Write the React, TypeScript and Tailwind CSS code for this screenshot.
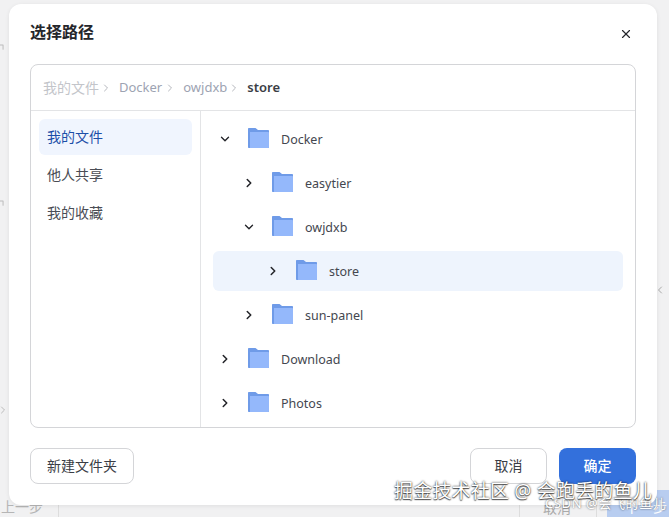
import { ChevronDown, ChevronRight, ChevronLeft, X } from 'lucide-react';

const rows = [
  { name: 'Docker', depth: 0, open: true },
  { name: 'easytier', depth: 1 },
  { name: 'owjdxb', depth: 1, open: true },
  { name: 'store', depth: 2, active: true },
  { name: 'sun-panel', depth: 1 },
  { name: 'Download', depth: 0 },
  { name: 'Photos', depth: 0 },
];

const depthPad = ['pl-[5px]', 'pl-[29px]', 'pl-[53px]'];

function Folder() {
  return (
    <svg width="21" height="20" viewBox="0 0 21 20" className="shrink-0">
      <path d="M0 1C0 .4.4 0 1 0h6.5L10 2h10c.6 0 1 .4 1 1v16c0 .6-.4 1-1 1H1c-.6 0-1-.4-1-1z" fill="#6f9be8" />
      <path d="M2 4h18c.6 0 1 .4 1 1v14c0 .6-.4 1-1 1H2z" fill="#94b8fb" />
    </svg>
  );
}

export default function App() {
  return (
    <div className="relative w-[669px] h-[517px] overflow-hidden bg-[#f1f1f2] pt-[4px] pl-[9px] font-['Noto_Sans','Noto_Sans_CJK_SC',sans-serif]">
      {/* page behind the dialog */}
      <ChevronRight className="absolute left-[-4px] top-[40px] w-3 h-3 text-[#bbb] -rotate-45" />
      <ChevronRight className="absolute left-[-4px] top-[196px] w-3 h-3 text-[#bbb] -rotate-45" />
      <ChevronRight className="absolute left-[-3px] top-[404px] w-3 h-3 text-[#bbb]" />
      <ChevronLeft className="absolute left-[654px] top-[284px] w-3 h-3 text-[#aaa]" />
      <span className="absolute left-[1px] top-[498px] text-[14px] leading-[18px] text-[#b5b5b5]">上一步</span>
      <div className="absolute left-[58px] top-[505px] w-px h-[12px] bg-[#ddd]" />
      <div className="absolute left-[519px] top-[505px] w-[78px] h-[12px] border-l border-r border-[#ddd]" />
      <span className="absolute left-[543px] top-[499px] text-[14px] leading-[18px] text-[#aaa]">取消</span>
      <div className="absolute left-[607px] top-[490px] w-[62px] h-[27px] bg-[#b8cdf0]" />
      <span className="absolute left-[625px] top-[498px] text-[14px] leading-[18px] text-white">下一步</span>

      <div className="relative w-[648px] h-[501px] bg-white rounded-xl px-[21px] flex flex-col shadow-[0_1px_4px_rgba(0,0,0,0.08)]">
        <div className="h-[60px] flex items-center justify-between shrink-0">
          <h1 className="text-base font-semibold text-[#25262b] -mt-[4px]">选择路径</h1>
          <button className="w-[14px] h-[14px] mr-[3px] flex items-center justify-center text-[#25262b]">
            <X className="w-[14px] h-[14px]" strokeWidth={2} />
          </button>
        </div>

        <div className="h-[364px] border border-[#d4d5d8] rounded-lg flex flex-col overflow-hidden shrink-0">
          <div className="h-[46px] shrink-0 border-b border-[#e3e4e6] flex items-center pl-[12px] text-[13px] text-[#9da3b2]">
            <span className="text-[14px] text-[#c3c5ca]">我的文件</span>
            <ChevronRight className="w-3 h-3 mx-[1px] text-[#b5b7bd]" />
            <span className="ml-[6px] mr-[1px]">Docker</span>
            <ChevronRight className="w-3 h-3 mx-[1px] text-[#b5b7bd]" />
            <span className="ml-[6px]">owjdxb</span>
            <ChevronRight className="w-3 h-3 mx-[1px] text-[#b5b7bd]" />
            <span className="ml-[6px] font-semibold text-[#3a3d45]">store</span>
          </div>
          <div className="flex flex-1 min-h-0">
            <div className="w-[170px] shrink-0 border-r border-[#e3e4e6] pt-[7px] px-[8px] flex flex-col gap-[2px] text-[14px] text-[#4a4d55] relative">
              <div className="absolute left-[8px] right-[8px] top-[8px] h-[36px] rounded-md bg-[#f0f5fe]" />
              <div className="relative h-[36px] text-[#1d4fa8] flex items-center px-[8px]">我的文件</div>
              <div className="h-[36px] flex items-center px-[8px]">他人共享</div>
              <div className="h-[36px] flex items-center px-[8px]">我的收藏</div>
            </div>
            <div className="flex-1 pt-[8px] pl-[12px] pr-[12px] flex flex-col gap-[4px] text-[12.5px] text-[#44474f]">
              {rows.map(r => (
                <div key={r.name} className={`h-[40px] shrink-0 rounded-md flex items-center ${depthPad[r.depth]} ${r.active ? 'bg-[#eef4fd]' : ''}`}>
                  {r.open ? (
                    <ChevronDown className="w-[14px] h-[14px] text-[#25262b] shrink-0" strokeWidth={2.4} />
                  ) : (
                    <ChevronRight className="w-[14px] h-[14px] text-[#25262b] shrink-0" strokeWidth={2.6} />
                  )}
                  <div className="ml-[16px] -mt-[2px]"><Folder /></div>
                  <span className="ml-[12px] mt-[2px]">{r.name}</span>
                </div>
              ))}
            </div>
          </div>
        </div>

        <div className="flex justify-between mt-[20px] text-[14px]">
          <button className="w-[104px] h-[36px] pb-[2px] border border-[#d4d5d8] rounded-lg text-[#3a3d45]">新建文件夹</button>
          <div className="flex gap-[12px]">
            <button className="w-[77px] h-[36px] pb-[2px] border border-[#d4d5d8] rounded-lg text-[#3a3d45]">取消</button>
            <button className="w-[77px] h-[36px] pb-[2px] rounded-lg bg-[#3370dc] text-white font-medium">确定</button>
          </div>
        </div>
      </div>

      {/* watermarks */}
      <span className="absolute left-[545px] top-[496px] text-[13px] leading-[14px] tracking-[0.6px] text-white [text-shadow:0_0_2px_rgba(0,0,0,0.7)] whitespace-nowrap">CSDN @会飞的鱼儿</span>
      <span className="absolute left-[394px] top-[478px] text-[19px] leading-[26px] tracking-[0.2px] text-white [text-shadow:0_0_2px_rgba(0,0,0,0.9),0_1px_1px_rgba(0,0,0,0.6)] whitespace-nowrap">掘金技术社区 @ 会跑丢的鱼儿</span>
    </div>
  );
}
